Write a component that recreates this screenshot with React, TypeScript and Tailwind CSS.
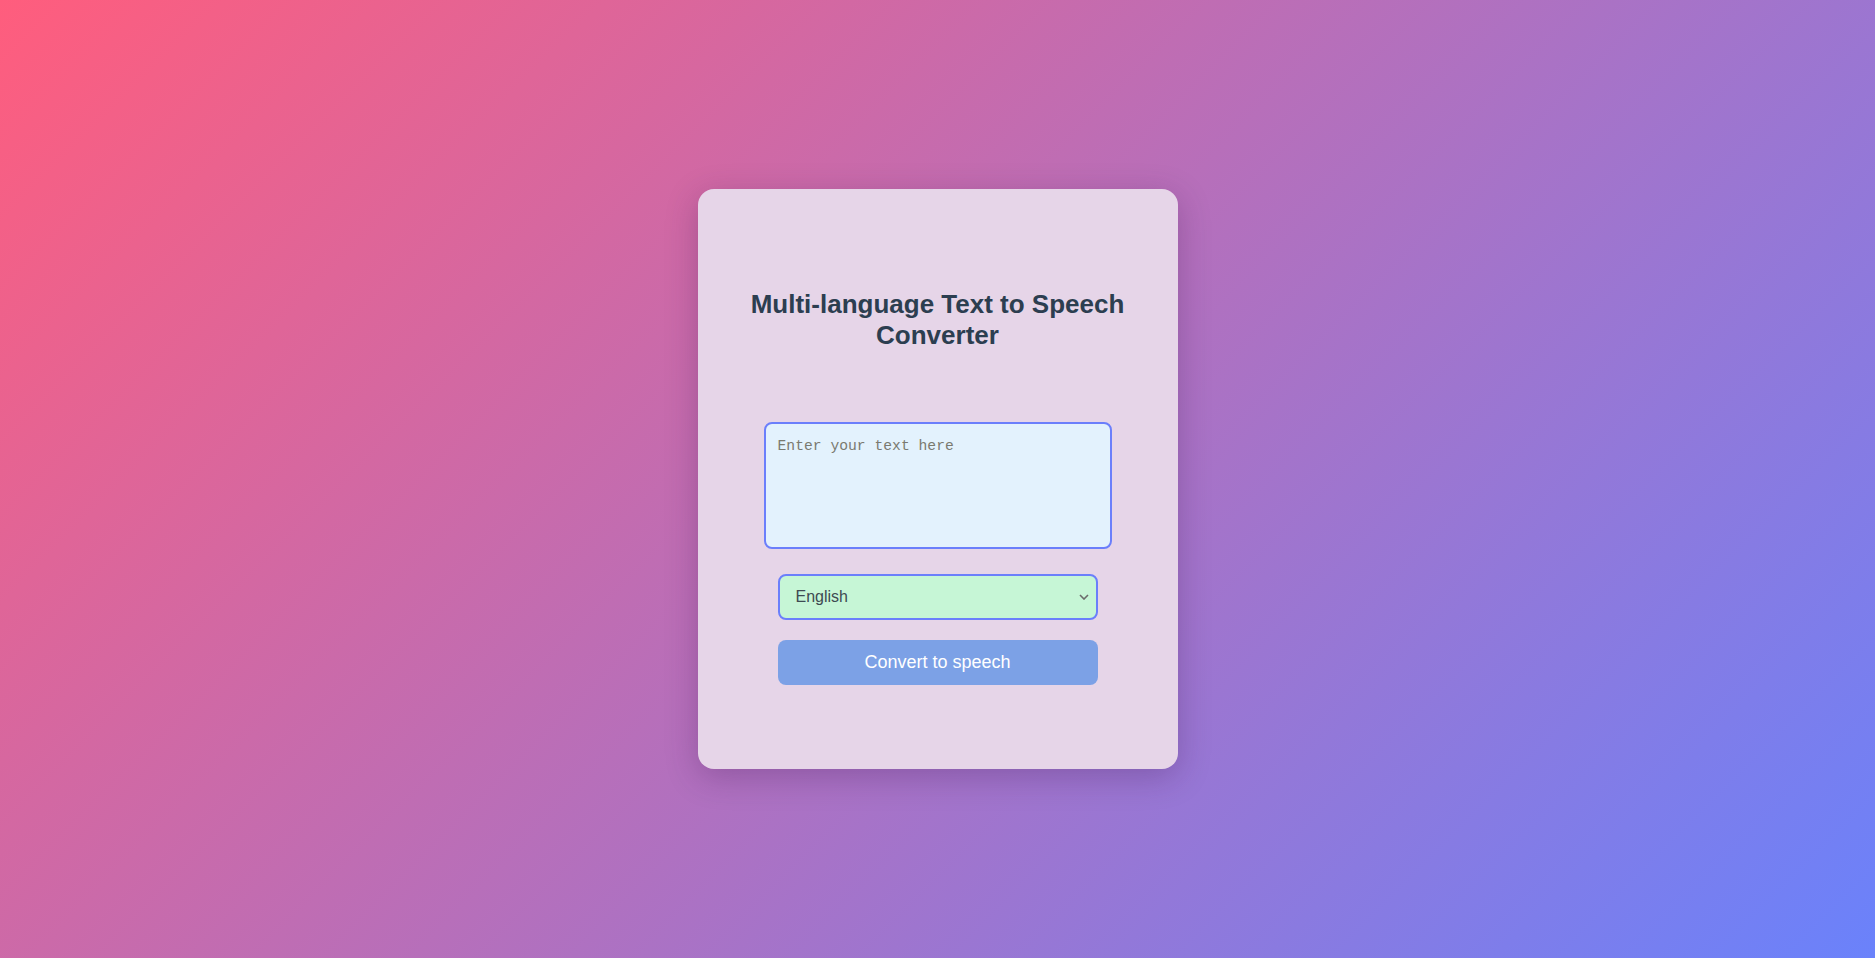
import { useState } from "react";

const languages = ["English", "Spanish", "French", "German", "Hindi", "Japanese"];

export default function App() {
  const [text, setText] = useState("");
  const [lang, setLang] = useState("English");

  return (
    <div className="min-h-screen w-full flex items-center justify-center bg-[linear-gradient(135deg,#ff5d7d,#6a82fb)] font-['Liberation_Sans',Arial,sans-serif]">
      {/* Card */}
      <div className="w-[480px] h-[580px] rounded-2xl bg-[#e6d5e8] shadow-[0_8px_32px_rgba(60,20,80,0.28)] flex flex-col items-center pt-[100px] px-10">
        <h1 className="text-[26px] leading-[31px] font-bold text-[#2c3e50] text-center">
          Multi-language Text to Speech Converter
        </h1>

        <textarea
          value={text}
          onChange={(e) => setText(e.target.value)}
          placeholder="Enter your text here"
          className="mt-[71px] w-[348px] h-[127px] resize-none rounded-lg border-2 border-[#6b7ffb] bg-[#e3f2fd] px-3 pt-[13px] pb-[11px] font-['Liberation_Mono',monospace] text-[14.7px] leading-[18px] text-[#2c3e50] placeholder:text-[#7a7a70] outline-none"
        />

        <div className="relative mt-[25px] w-[320px]">
          <select
            value={lang}
            onChange={(e) => setLang(e.target.value)}
            className="w-full h-[46px] appearance-none rounded-lg border-2 border-[#6b7ffb] bg-[#c6f6d6] pl-4 pr-8 text-base text-[#3d4a52] outline-none"
          >
            {languages.map((l) => (
              <option key={l} value={l}>
                {l}
              </option>
            ))}
          </select>
          <svg
            className="pointer-events-none absolute right-[9px] top-1/2 -translate-y-1/2"
            width="10"
            height="6"
            viewBox="0 0 10 6"
            fill="none"
          >
            <path d="M1 1l4 4 4-4" stroke="#6b6b6b" strokeWidth="1.6" />
          </svg>
        </div>

        <button className="mt-[20px] w-[320px] h-[45px] rounded-lg bg-[#7ca1e6] text-white text-lg leading-[20px] pb-[2px]">
          Convert to speech
        </button>
      </div>
    </div>
  );
}
